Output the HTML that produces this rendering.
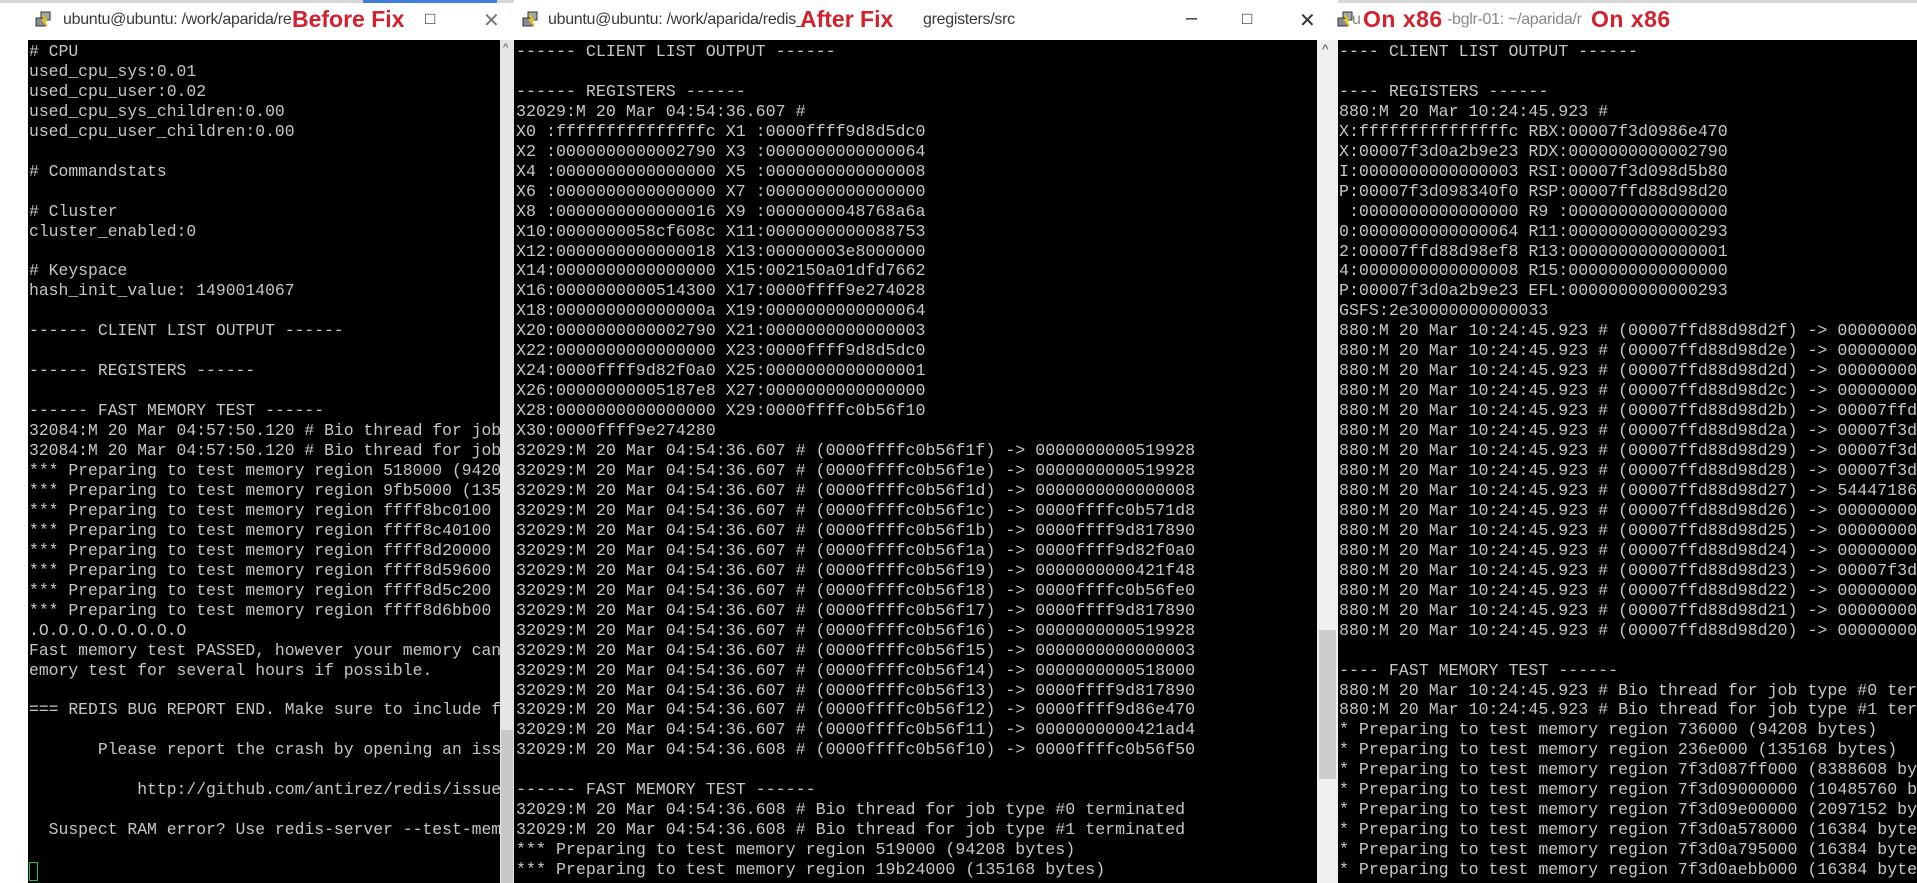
<!DOCTYPE html>
<html><head><meta charset="utf-8"><style>
*{margin:0;padding:0;box-sizing:border-box}
body{width:1917px;height:883px;overflow:hidden;background:#fff;position:relative;font-family:"Liberation Sans",sans-serif}
.abs{position:absolute}
.term{position:absolute;background:#000;overflow:hidden;color:#c6c6c6;font-family:"Liberation Mono",monospace;white-space:pre;line-height:19.95px;padding-top:2px}
.tb{position:absolute;background:#fff;height:40px;top:0;overflow:hidden}
.tt{position:absolute;top:11px;font-size:16px;color:#3a3a3a;white-space:nowrap;letter-spacing:-0.3px}
.red{position:absolute;top:6px;font-size:23px;font-weight:bold;color:#d2222d;white-space:nowrap}
.ctl{position:absolute;top:8px;font-size:20px;color:#333}
.sb{position:absolute;background:#f0f0f0}
.ic{position:absolute;top:11px}
</style></head><body>
<div class="abs" style="left:0;top:0;width:1917px;height:3px;background:#d8d8d8"></div>
<div class="abs" style="left:363px;top:0;width:134px;height:3px;background:#3c7fd6"></div>

<!-- Window 1 -->
<div class="tb" style="left:0;width:514px;top:3px;height:37px"></div>
<svg class="ic" style="left:34px" width="18" height="18" viewBox="0 0 18 18"><rect x="7" y="1" width="9" height="8" fill="#9aa" stroke="#333"/><rect x="2" y="7" width="9" height="8" fill="#889" stroke="#333"/><path d="M8 4 L12 9 L9 9 L13 15" stroke="#e8c020" stroke-width="2" fill="none"/></svg>
<div class="tt" style="left:63px">ubuntu@ubuntu: /work/aparida/re</div>
<div class="red" style="left:292px;background:transparent">Before Fix</div>
<div class="ctl" style="left:425px;top:9px;font-size:17px">□</div>
<div class="ctl" style="left:483px;color:#777">✕</div>
<div class="term" style="left:28px;top:40px;width:472px;height:843px;font-size:16.4px;padding-left:1px"># CPU
used_cpu_sys:0.01
used_cpu_user:0.02
used_cpu_sys_children:0.00
used_cpu_user_children:0.00

# Commandstats

# Cluster
cluster_enabled:0

# Keyspace
hash_init_value: 1490014067

------ CLIENT LIST OUTPUT ------

------ REGISTERS ------

------ FAST MEMORY TEST ------
32084:M 20 Mar 04:57:50.120 # Bio thread for job type #0 terminated
32084:M 20 Mar 04:57:50.120 # Bio thread for job type #1 terminated
*** Preparing to test memory region 518000 (94208 bytes)
*** Preparing to test memory region 9fb5000 (135168 bytes)
*** Preparing to test memory region ffff8bc0100 (8388608 bytes)
*** Preparing to test memory region ffff8c40100 (8388608 bytes)
*** Preparing to test memory region ffff8d20000 (8388608 bytes)
*** Preparing to test memory region ffff8d59600 (8388608 bytes)
*** Preparing to test memory region ffff8d5c200 (8388608 bytes)
*** Preparing to test memory region ffff8d6bb00 (8388608 bytes)
.O.O.O.O.O.O.O.O
Fast memory test PASSED, however your memory can still be broken. Please run a
emory test for several hours if possible.

=== REDIS BUG REPORT END. Make sure to include from START to END. ===

       Please report the crash by opening an issue on github:

           http://github.com/antirez/redis/issues

  Suspect RAM error? Use redis-server --test-memory to verify it.

</div>
<div class="abs" style="left:29px;top:862px;width:9px;height:19px;border:1px solid #2ec02e"></div>
<div class="sb" style="left:500px;top:40px;width:14px;height:843px;background:#e6e6e6"></div>
<div class="abs" style="left:501px;top:730px;width:12px;height:153px;background:#c8c8c8"></div>
<div class="abs" style="left:503px;top:42px;font-size:11px;color:#555">^</div>

<!-- Window 2 -->
<div class="tb" style="left:514px;width:824px"></div>
<svg class="ic" style="left:521px" width="18" height="18" viewBox="0 0 18 18"><rect x="7" y="1" width="9" height="8" fill="#9aa" stroke="#333"/><rect x="2" y="7" width="9" height="8" fill="#889" stroke="#333"/><path d="M8 4 L12 9 L9 9 L13 15" stroke="#e8c020" stroke-width="2" fill="none"/></svg>
<div class="tt" style="left:548px">ubuntu@ubuntu: /work/aparida/redis_</div>
<div class="red" style="left:800px">After Fix</div>
<div class="tt" style="left:923px">gregisters/src</div>
<div class="ctl" style="left:1186px;top:7px">–</div>
<div class="ctl" style="left:1242px;top:9px;font-size:17px">□</div>
<div class="ctl" style="left:1299px">✕</div>
<div class="term" style="left:514px;top:40px;width:803px;height:843px;font-size:16.65px;padding-left:2px">------ CLIENT LIST OUTPUT ------

------ REGISTERS ------
32029:M 20 Mar 04:54:36.607 #
X0 :fffffffffffffffc X1 :0000ffff9d8d5dc0
X2 :0000000000002790 X3 :0000000000000064
X4 :0000000000000000 X5 :0000000000000008
X6 :0000000000000000 X7 :0000000000000000
X8 :0000000000000016 X9 :0000000048768a6a
X10:0000000058cf608c X11:0000000000088753
X12:0000000000000018 X13:00000003e8000000
X14:0000000000000000 X15:002150a01dfd7662
X16:0000000000514300 X17:0000ffff9e274028
X18:000000000000000a X19:0000000000000064
X20:0000000000002790 X21:0000000000000003
X22:0000000000000000 X23:0000ffff9d8d5dc0
X24:0000ffff9d82f0a0 X25:0000000000000001
X26:00000000005187e8 X27:0000000000000000
X28:0000000000000000 X29:0000ffffc0b56f10
X30:0000ffff9e274280
32029:M 20 Mar 04:54:36.607 # (0000ffffc0b56f1f) -> 0000000000519928
32029:M 20 Mar 04:54:36.607 # (0000ffffc0b56f1e) -> 0000000000519928
32029:M 20 Mar 04:54:36.607 # (0000ffffc0b56f1d) -> 0000000000000008
32029:M 20 Mar 04:54:36.607 # (0000ffffc0b56f1c) -> 0000ffffc0b571d8
32029:M 20 Mar 04:54:36.607 # (0000ffffc0b56f1b) -> 0000ffff9d817890
32029:M 20 Mar 04:54:36.607 # (0000ffffc0b56f1a) -> 0000ffff9d82f0a0
32029:M 20 Mar 04:54:36.607 # (0000ffffc0b56f19) -> 0000000000421f48
32029:M 20 Mar 04:54:36.607 # (0000ffffc0b56f18) -> 0000ffffc0b56fe0
32029:M 20 Mar 04:54:36.607 # (0000ffffc0b56f17) -> 0000ffff9d817890
32029:M 20 Mar 04:54:36.607 # (0000ffffc0b56f16) -> 0000000000519928
32029:M 20 Mar 04:54:36.607 # (0000ffffc0b56f15) -> 0000000000000003
32029:M 20 Mar 04:54:36.607 # (0000ffffc0b56f14) -> 0000000000518000
32029:M 20 Mar 04:54:36.607 # (0000ffffc0b56f13) -> 0000ffff9d817890
32029:M 20 Mar 04:54:36.607 # (0000ffffc0b56f12) -> 0000ffff9d86e470
32029:M 20 Mar 04:54:36.607 # (0000ffffc0b56f11) -> 0000000000421ad4
32029:M 20 Mar 04:54:36.608 # (0000ffffc0b56f10) -> 0000ffffc0b56f50

------ FAST MEMORY TEST ------
32029:M 20 Mar 04:54:36.608 # Bio thread for job type #0 terminated
32029:M 20 Mar 04:54:36.608 # Bio thread for job type #1 terminated
*** Preparing to test memory region 519000 (94208 bytes)
*** Preparing to test memory region 19b24000 (135168 bytes)</div>
<div class="sb" style="left:1317px;top:40px;width:21px;height:843px"></div>
<div class="abs" style="left:1319px;top:630px;width:17px;height:149px;background:#cdcdcd"></div>
<div class="abs" style="left:1322px;top:41px;font-size:14px;color:#555">^</div>

<!-- Window 3 -->
<div class="tb" style="left:1338px;width:579px;top:3px;height:37px"></div>
<svg class="ic" style="left:1336px" width="18" height="18" viewBox="0 0 18 18"><rect x="7" y="1" width="9" height="8" fill="#9aa" stroke="#333"/><rect x="2" y="7" width="9" height="8" fill="#889" stroke="#333"/><path d="M8 4 L12 9 L9 9 L13 15" stroke="#e8c020" stroke-width="2" fill="none"/></svg>
<div class="tt" style="left:1352px;color:#888">u</div>
<div class="red" style="left:1363px;letter-spacing:0.5px">On x86</div>
<div class="tt" style="left:1447px;color:#888">-bglr-01: ~/aparida/r</div>
<div class="red" style="left:1591px;letter-spacing:0.5px">On x86</div>
<div class="term" style="left:1338px;top:40px;width:579px;height:843px;font-size:16.63px;padding-left:1px">---- CLIENT LIST OUTPUT ------

---- REGISTERS ------
880:M 20 Mar 10:24:45.923 #
X:fffffffffffffffc RBX:00007f3d0986e470
X:00007f3d0a2b9e23 RDX:0000000000002790
I:0000000000000003 RSI:00007f3d098d5b80
P:00007f3d098340f0 RSP:00007ffd88d98d20
 :0000000000000000 R9 :0000000000000000
0:0000000000000064 R11:0000000000000293
2:00007ffd88d98ef8 R13:0000000000000001
4:0000000000000008 R15:0000000000000000
P:00007f3d0a2b9e23 EFL:0000000000000293
GSFS:2e30000000000033
880:M 20 Mar 10:24:45.923 # (00007ffd88d98d2f) -> 0000000000000000
880:M 20 Mar 10:24:45.923 # (00007ffd88d98d2e) -> 0000000000000000
880:M 20 Mar 10:24:45.923 # (00007ffd88d98d2d) -> 0000000000000000
880:M 20 Mar 10:24:45.923 # (00007ffd88d98d2c) -> 0000000000000000
880:M 20 Mar 10:24:45.923 # (00007ffd88d98d2b) -> 00007ffd88d98f00
880:M 20 Mar 10:24:45.923 # (00007ffd88d98d2a) -> 00007f3d0a2b9e23
880:M 20 Mar 10:24:45.923 # (00007ffd88d98d29) -> 00007f3d098340f0
880:M 20 Mar 10:24:45.923 # (00007ffd88d98d28) -> 00007f3d098d5b80
880:M 20 Mar 10:24:45.923 # (00007ffd88d98d27) -> 5444718600000000
880:M 20 Mar 10:24:45.923 # (00007ffd88d98d26) -> 0000000000000000
880:M 20 Mar 10:24:45.923 # (00007ffd88d98d25) -> 0000000000000000
880:M 20 Mar 10:24:45.923 # (00007ffd88d98d24) -> 0000000000000000
880:M 20 Mar 10:24:45.923 # (00007ffd88d98d23) -> 00007f3d0986e470
880:M 20 Mar 10:24:45.923 # (00007ffd88d98d22) -> 0000000000000000
880:M 20 Mar 10:24:45.923 # (00007ffd88d98d21) -> 0000000000000000
880:M 20 Mar 10:24:45.923 # (00007ffd88d98d20) -> 0000000000000000

---- FAST MEMORY TEST ------
880:M 20 Mar 10:24:45.923 # Bio thread for job type #0 terminated
880:M 20 Mar 10:24:45.923 # Bio thread for job type #1 terminated
* Preparing to test memory region 736000 (94208 bytes)
* Preparing to test memory region 236e000 (135168 bytes)
* Preparing to test memory region 7f3d087ff000 (8388608 bytes)
* Preparing to test memory region 7f3d09000000 (10485760 bytes)
* Preparing to test memory region 7f3d09e00000 (2097152 bytes)
* Preparing to test memory region 7f3d0a578000 (16384 bytes)
* Preparing to test memory region 7f3d0a795000 (16384 bytes)
* Preparing to test memory region 7f3d0aebb000 (16384 bytes)</div>
</body></html>
